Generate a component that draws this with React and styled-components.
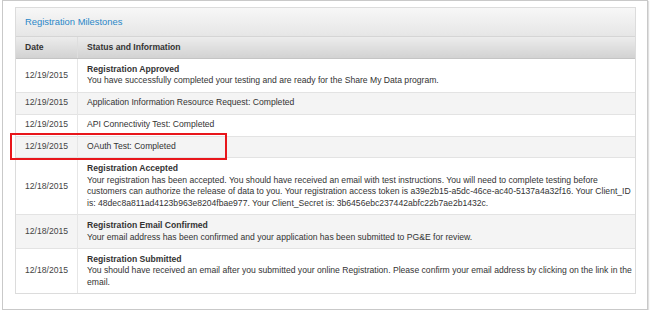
import React from 'react'
import styled, { createGlobalStyle } from 'styled-components'

const Global = createGlobalStyle`
  html, body {
    margin: 0;
    padding: 0;
    background: #ffffff;
  }
  body {
    font-family: "Liberation Sans", Arial, sans-serif;
  }
`

const Frame = styled.div`
  position: relative;
  box-sizing: border-box;
  margin-left: 2px;
  width: 646px;
  height: 310px;
  border: 1px solid #c9c9c9;
  box-shadow: 1px 1px 1px rgba(0,0,0,0.12);
  background: #fff;
  padding: 6px 11px 0 12px;
`

const Panel = styled.div`
  box-sizing: border-box;
  width: 621px;
  border: 1px solid #dcdcdc;
  background: #fff;
`

const Heading = styled.div`
  box-sizing: border-box;
  height: 29px;
  padding: 8px 9px;
  font-size: 9.4px;
  line-height: 12px;
  color: #2a87c8;
  background: linear-gradient(to bottom, #f7f7f7 0%, #e6e6e6 100%);
  border-bottom: 1px solid #d5d5d5;
`

const Table = styled.table`
  width: 100%;
  border-collapse: collapse;
  font-size: 8.6px;
  line-height: 11.7px;
  color: #333;
`

const HeadCell = styled.th`
  text-align: left;
  font-weight: bold;
  color: #333;
  padding: 4.6px 9px;
  height: 12px;
  background: linear-gradient(to bottom, #ececec 0%, #d2d2d2 100%);
  border-right: ${p => (p.$first ? '1px solid #dedede' : 'none')};
  width: ${p => (p.$first ? '43px' : 'auto')};
  border-bottom: 1px solid #c4c4c4;
`

const Row = styled.tr`
  background: ${p => (p.$shade ? '#f4f4f4' : '#ffffff')};
  border-top: 1px solid #e3e3e3;
`

const DateCell = styled.td`
  padding: 4.6px 9px;
  vertical-align: middle;
  color: #444;
  white-space: nowrap;
  border-right: 1px solid #e6e6e6;
`

const InfoCell = styled.td`
  padding: 4.6px 2px 4.6px 9px;
  vertical-align: top;
  color: #333;
`

const Title = styled.div`
  font-weight: bold;
  color: #333;
`

const Highlight = styled.div`
  position: absolute;
  left: 7px;
  top: 132px;
  width: 213px;
  height: 23px;
  border: 2px solid #e8161b;
  pointer-events: none;
`

const rows = [
  {
    date: '12/19/2015',
    title: 'Registration Approved',
    text: 'You have successfully completed your testing and are ready for the Share My Data program.',
  },
  { date: '12/19/2015', text: 'Application Information Resource Request: Completed' },
  { date: '12/19/2015', text: 'API Connectivity Test: Completed' },
  { date: '12/19/2015', text: 'OAuth Test: Completed' },
  {
    date: '12/18/2015',
    title: 'Registration Accepted',
    text: 'Your registration has been accepted. You should have received an email with test instructions. You will need to complete testing before customers can authorize the release of data to you. Your registration access token is a39e2b15-a5dc-46ce-ac40-5137a4a32f16. Your Client_ID is: 48dec8a811ad4123b963e8204fbae977. Your Client_Secret is: 3b6456ebc237442abfc22b7ae2b1432c.',
  },
  {
    date: '12/18/2015',
    title: 'Registration Email Confirmed',
    text: 'Your email address has been confirmed and your application has been submitted to PG&E for review.',
  },
  {
    date: '12/18/2015',
    title: 'Registration Submitted',
    text: 'You should have received an email after you submitted your online Registration. Please confirm your email address by clicking on the link in the email.',
  },
]

const App = () => {
  return (
    <>
      <Global />
      <Frame>
        <Panel>
          <Heading>Registration Milestones</Heading>
          <Table>
            <thead>
              <tr>
                <HeadCell $first>Date</HeadCell>
                <HeadCell>Status and Information</HeadCell>
              </tr>
            </thead>
            <tbody>
              {rows.map((r, i) => (
                <Row key={i} $shade={i % 2 === 1}>
                  <DateCell>{r.date}</DateCell>
                  <InfoCell>
                    {r.title && <Title>{r.title}</Title>}
                    {r.text}
                  </InfoCell>
                </Row>
              ))}
            </tbody>
          </Table>
        </Panel>
        <Highlight />
      </Frame>
    </>
  )
}

export default App
